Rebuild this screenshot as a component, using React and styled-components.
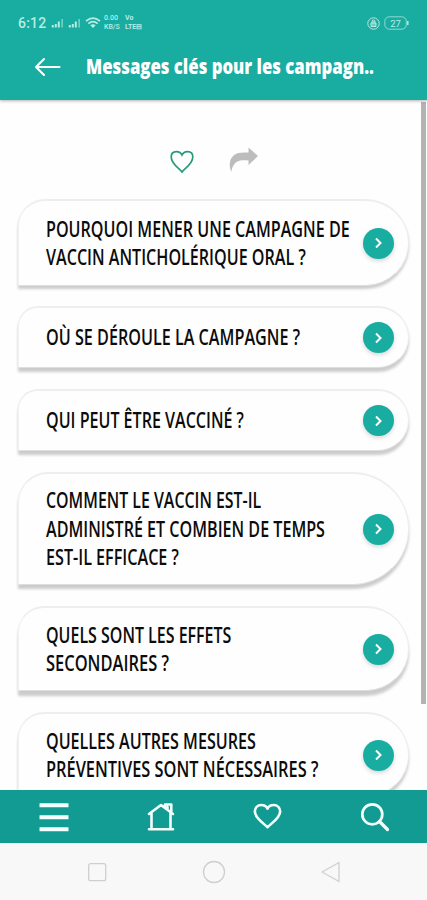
import React, { useLayoutEffect, useRef, useState } from "react";
import styled, { createGlobalStyle } from "styled-components";

const GlobalStyle = createGlobalStyle`
  * { box-sizing: border-box; }
  body { margin: 0; background: #fff; overflow: hidden; }
`;

const Screen = styled.div`
  width: 427px;
  height: 900px;
  display: flex;
  flex-direction: column;
  background: #fefefe;
  overflow: hidden;
  font-family: "Open Sans", sans-serif;
`;

const Header = styled.header`
  flex: none;
  height: 100px;
  background: #19aca1;
  color: #fff;
  box-shadow: 0 1px 3px rgba(0, 0, 0, 0.3);
  z-index: 1;
`;

const StatusBar = styled.div`
  height: 46px;
  padding: 0 18px 0 18px;
  display: flex;
  align-items: center;
  color: #b5ece3;
  svg { display: block; flex: none; }
`;

const Clock = styled.span`
  width: 32px;
  font: 500 14px/20px Roboto, sans-serif;
  letter-spacing: 0.2px;
`;

const Signal = styled.svg`
  margin-left: ${(p) => p.$gap}px;
`;

const TinyStack = styled.div`
  width: ${(p) => p.$width}px;
  margin-left: 3px;
  font: ${(p) => (p.$bold ? 700 : 500)} 7px/9px Roboto, sans-serif;
  white-space: nowrap;
`;

const StatusRight = styled.div`
  margin-left: auto;
  display: flex;
  align-items: center;
  gap: 4px;
`;

const TitleRow = styled.div`
  height: 40px;
  padding-left: 34px;
  display: flex;
  align-items: center;
`;

const BackButton = styled.div`
  width: 52px;
  height: 24px;
  svg { display: block; }
`;

const Title = styled.h1`
  margin: 0;
  font-size: 21px;
  line-height: 28px;
  font-weight: 800;
`;

const Content = styled.main`
  flex: 1;
  min-height: 0;
  display: flex;
  justify-content: space-between;
  overflow: hidden;
`;

const Column = styled.div`
  width: 391px;
  margin-left: 18px;
`;

const ScrollThumb = styled.div`
  width: 5px;
  height: 602px;
  margin: 2px 1px 0 0;
  background: #b3b3b3;
`;

const Actions = styled.div`
  height: 99px;
  padding: 47px 0 0 151px;
  display: flex;
  gap: 34px;
`;

const CardList = styled.div`
  display: flex;
  flex-direction: column;
  gap: 21px;
`;

const Card = styled.section`
  height: ${(p) => p.$height}px;
  padding: 0 14px 0 27px;
  display: flex;
  flex: none;
  align-items: center;
  justify-content: space-between;
  background: #fefefe;
  border: 2px solid #eeeeee;
  border-right-width: 1px;
  border-bottom: 1px solid #dedede;
  border-left: 1px solid #f0f0f0;
  border-radius: ${(p) => `${p.$corner}px ${p.$height / 2}px ${p.$height / 2}px 0`};
  box-shadow: 0 ${(p) => p.$depth}px 3px rgba(0, 0, 0, 0.2);

  &:first-child { margin-bottom: -1px; }
`;

const Question = styled.div`
  color: #0c0c0c;
  font-size: 21px;
  line-height: 28.5px;
  font-weight: 650;
`;

const Line = styled.div`
  width: max-content;
  white-space: nowrap;
  transform-origin: left center;
`;

const LineBox = styled.div`
  width: ${(p) => p.$width}px;
`;

const Go = styled.div`
  flex: none;
  width: 31px;
  height: 31px;
  border-radius: 50%;
  background: #19aca1;
  box-shadow: 0 2px 4px rgba(0, 0, 0, 0.16);
  display: flex;
  align-items: center;
  justify-content: center;
`;

const TabBar = styled.nav`
  flex: none;
  height: 53px;
  background: #129b92;
  display: grid;
  grid-template-columns: repeat(4, 107px);
  place-items: center;
  z-index: 1;
`;

const SystemBar = styled.footer`
  flex: none;
  height: 57px;
  padding: 0 86px 0 87px;
  background: #f8f8f8;
  display: flex;
  align-items: center;
  justify-content: space-between;
`;

/* Condenses a line of text horizontally to the given width. */
function FitLine({ width, children }) {
  const ref = useRef(null);
  const [scale, setScale] = useState(1);
  useLayoutEffect(() => {
    setScale(width / ref.current.offsetWidth);
  }, [width]);
  return (
    <LineBox $width={width}>
      <Line ref={ref} style={{ transform: `scaleX(${scale})` }}>{children}</Line>
    </LineBox>
  );
}

function SignalIcon({ gap }) {
  return (
    <Signal $gap={gap} width="13" height="10" viewBox="0 0 13 10" fill="currentColor">
      <path d="M.8 7h2v2.500h-2zM3.800 6h2v3.500h-2zM6.800 3.500h2v6h-2z" />
      <path d="M10.300 1H12v8.500h-1.700z" opacity=".55" />
    </Signal>
  );
}

const HEART = "M12 21.500C9.500 18.500 1.500 13.500 1.500 7.500C1.500 4 4 1.800 6.800 1.800C9.300 1.800 11.200 3.200 12 5C12.800 3.200 14.700 1.800 17.200 1.800C20 1.800 22.500 4 22.500 7.500C22.500 13.500 14.500 18.500 12 21.500Z";

const cards = [
  { height: 87, corner: 27, depth: 3, lines: [["POURQUOI MENER UNE CAMPAGNE DE", 304], ["VACCIN ANTICHOLÉRIQUE ORAL ?", 260]] },
  { height: 62, corner: 20, depth: 4, lines: [["OÙ SE DÉROULE LA CAMPAGNE ?", 254]] },
  { height: 62, corner: 20, depth: 4, lines: [["QUI PEUT ÊTRE VACCINÉ ?", 198]] },
  { height: 113, corner: 30, depth: 4, lines: [["COMMENT LE VACCIN EST-IL", 215], ["ADMINISTRÉ ET COMBIEN DE TEMPS", 279], ["EST-IL EFFICACE ?", 133]] },
  { height: 85, corner: 26, depth: 5, lines: [["QUELS SONT LES EFFETS", 185], ["SECONDAIRES ?", 123]] },
  { height: 85, corner: 26, depth: 4, lines: [["QUELLES AUTRES MESURES", 210], ["PRÉVENTIVES SONT NÉCESSAIRES ?", 272]] },
];

export default function App() {
  return (
    <Screen>
      <GlobalStyle />
      <Header>
        <StatusBar>
          <Clock>6:12</Clock>
          <SignalIcon gap={1} />
          <SignalIcon gap={4} />
          <Signal $gap={4} width="16" height="12" viewBox="0 0 16 12" fill="none" stroke="currentColor" strokeWidth="1.7">
            <path d="M1 4.200Q8-1.800 15 4.200M3.300 6.600Q8 2.600 12.700 6.600" />
            <path d="M5.300 8.300Q8 6.100 10.700 8.300L8 11Z" fill="currentColor" stroke="none" />
          </Signal>
          <TinyStack $width={18}>0.00<br />KB/S</TinyStack>
          <TinyStack $width={21} $bold>Vo<br />LTE⊟</TinyStack>
          <StatusRight>
            <svg width="13" height="13" viewBox="0 0 13 13" fill="none" stroke="currentColor">
              <circle cx="6.500" cy="6.500" r="5.700" />
              <path d="M4 6h5v3.500H4zM5 6V4.500a1.500 1.500 0 0 1 3 0V6" fill="currentColor" fillOpacity=".5" />
            </svg>
            <svg width="25" height="14" viewBox="0 0 25 14" fill="none" stroke="currentColor">
              <rect x=".8" y=".8" width="21.500" height="12.400" rx="4.500" opacity=".75" />
              <path d="M23.800 5v4" strokeWidth="1.500" />
              <text x="11.500" y="10.500" textAnchor="middle" fontFamily="Roboto, sans-serif" fontSize="9.500" fill="currentColor" stroke="none">27</text>
            </svg>
          </StatusRight>
        </StatusBar>
        <TitleRow>
          <BackButton>
            <svg width="28" height="24" viewBox="0 0 28 24" fill="none" stroke="#fff" strokeWidth="2.100" strokeLinecap="round" strokeLinejoin="round">
              <path d="M25.500 13H2M10 5L2 13L10 21" />
            </svg>
          </BackButton>
          <Title><FitLine width={288}>Messages clés pour les campagn..</FitLine></Title>
        </TitleRow>
      </Header>
      <Content>
        <Column>
          <Actions>
            <svg width="26" height="29" viewBox="0 0 26 29" fill="none" stroke="#269b7b" strokeWidth="1.700">
              <path d="M13 25C10.500 21 2.200 17.500 2.200 9.800C2.200 6.200 4.700 4.600 7.400 4.600C10.300 4.600 12.200 6.200 13 8C13.800 6.200 15.700 4.600 18.600 4.600C21.300 4.600 23.800 6.200 23.800 9.800C23.800 17.500 15.500 21 13 25Z" />
            </svg>
            <svg width="30" height="28" viewBox="0 0 30 28" fill="#bdbdbd">
              <path d="M19.500 .5L29 9L19.500 18V13.500C11 12.500 4 13.500 2.300 25C-.5 18 .5 12.500 4.500 8.500C8 5.500 12 5.300 19.500 5.500Z" />
            </svg>
          </Actions>
          <CardList>
            {cards.map((card) => (
              <Card key={card.lines[0][0]} $height={card.height} $corner={card.corner} $depth={card.depth}>
                <Question>
                  {card.lines.map(([text, width]) => <FitLine key={text} width={width}>{text}</FitLine>)}
                </Question>
                <Go>
                  <svg width="9" height="12" viewBox="0 0 9 12" fill="none" stroke="#fff" strokeWidth="2">
                    <path d="M2 1.500L6.500 6L2 10.500" />
                  </svg>
                </Go>
              </Card>
            ))}
          </CardList>
        </Column>
        <ScrollThumb />
      </Content>
      <TabBar>
        <svg width="30" height="30" viewBox="0 0 30 30" stroke="#f2fffd" strokeWidth="3.900">
          <path d="M.5 3.200H29.500M.5 15.200H29.500M.5 27.200H29.500" />
        </svg>
        <svg width="28" height="30" viewBox="0 0 28 30" fill="none" stroke="#f2fffd" strokeWidth="2.600" strokeLinejoin="round" strokeLinecap="round">
          <path d="M2 27.300H26M4.500 27V11.500M23.500 27V11.500M2 12L14 3L26 12M18 5V2.500H24.300V10M20.500 5V7" />
        </svg>
        <svg width="29" height="27" viewBox="0 0 24 24" preserveAspectRatio="none" fill="none" stroke="#f2fffd" strokeWidth="2.200" strokeLinejoin="round">
          <path d={HEART} />
        </svg>
        <svg width="30" height="30" viewBox="0 0 30 30" fill="none" stroke="#f2fffd" strokeWidth="2.700" strokeLinecap="round">
          <circle cx="12.300" cy="12.300" r="10" />
          <path d="M19.500 19.500L27.500 27.500" strokeWidth="3.200" />
        </svg>
      </TabBar>
      <SystemBar>
        <svg width="20" height="20" viewBox="0 0 20 20" fill="none" stroke="#cfcfcf" strokeWidth="1.300"><rect x="1.700" y="1.700" width="17" height="17" rx="2" /></svg>
        <svg width="24" height="24" viewBox="0 0 24 24" fill="none" stroke="#cfcfcf" strokeWidth="1.300"><circle cx="12" cy="12" r="10.500" /></svg>
        <svg width="21" height="22" viewBox="0 0 21 22" fill="none" stroke="#cfcfcf" strokeWidth="1.300" strokeLinejoin="round"><path d="M19 1.500V20.500L2 11Z" /></svg>
      </SystemBar>
    </Screen>
  );
}
